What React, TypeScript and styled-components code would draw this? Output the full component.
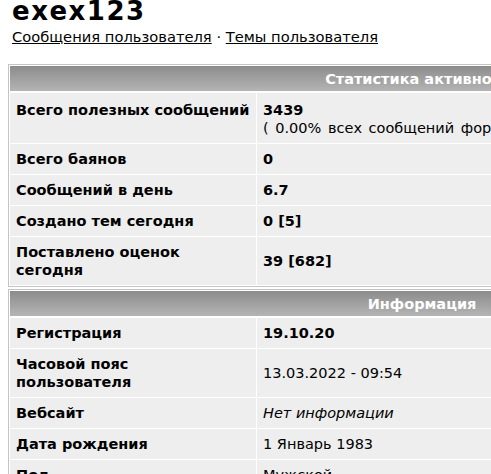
import React from "react";
import styled, { createGlobalStyle } from "styled-components";

const Global = createGlobalStyle`
  html, body { margin: 0; padding: 0; overflow: hidden; background: #fff; }
  body { font-family: "DejaVu Sans", Verdana, sans-serif; color: #000; }
`;

const Page = styled.div`
  padding: 0 8px;
  width: 828px;
`;

const Head = styled.div`
  padding-left: 4px;
`;

const Title = styled.h1`
  margin: 0;
  font-size: 26px;
  line-height: 23px;
  letter-spacing: 1.5px;
  font-weight: bold;
  white-space: nowrap;
`;

const Links = styled.div`
  font-size: 14.7px;
  line-height: 17px;
  margin-top: 5px;
  white-space: nowrap;
  a { color: #000; text-decoration: underline; }
`;

const Box = styled.div<{ $top: number }>`
  margin-top: ${(p) => p.$top}px;
  border: 1px solid #c4c4c4;
  padding: 1px;
  background: #fff;
  display: grid;
  grid-template-columns: 246px 1fr;
  gap: 1px;
  font-size: 14.5px;
  line-height: 18px;
`;

const Header = styled.div`
  grid-column: 1 / -1;
  height: 25px;
  margin-bottom: 1px;
  background: linear-gradient(#8c8c8c, #b4b4b4);
  color: #fff;
  font-weight: bold;
  display: flex;
  align-items: center;
  justify-content: center;
  white-space: nowrap;
`;

const Label = styled.div<{ $top?: boolean }>`
  background: #eeeeee;
  font-weight: bold;
  padding: ${(p) => (p.$top ? "8px 6px 6px" : "6px")};
  display: flex;
  align-items: ${(p) => (p.$top ? "flex-start" : "center")};
`;

const Value = styled.div<{ $bold?: boolean; $italic?: boolean; $top?: boolean }>`
  background: #eeeeee;
  padding: ${(p) => (p.$top ? "8px 6px 6px" : "6px")};
  font-weight: ${(p) => (p.$bold ? "bold" : "normal")};
  font-style: ${(p) => (p.$italic ? "italic" : "normal")};
  display: flex;
  flex-direction: column;
  justify-content: center;
  white-space: nowrap;
`;

const Strong = styled.span`
  font-weight: bold;
`;

const Share = styled.span`
  word-spacing: 2px;
`;

export default function App() {
  return (
    <>
      <Global />
      <Page>
        <Head>
          <Title>exex123</Title>
          <Links>
            <a href="#">Сообщения пользователя</a> · <a href="#">Темы пользователя</a>
          </Links>
        </Head>
        <Box $top={19}>
          <Header>Статистика активности</Header>
          <Label $top>Всего полезных сообщений</Label>
          <Value $top>
            <Strong>3439</Strong>
            <Share>( 0.00% всех сообщений форума )</Share>
          </Value>
          <Label>Всего баянов</Label>
          <Value $bold>0</Value>
          <Label>Сообщений в день</Label>
          <Value $bold>6.7</Value>
          <Label>Создано тем сегодня</Label>
          <Value $bold>0 [5]</Value>
          <Label>Поставлено оценок сегодня</Label>
          <Value $bold>39 [682]</Value>
        </Box>
        <Box $top={2}>
          <Header>Информация</Header>
          <Label>Регистрация</Label>
          <Value $bold>19.10.20</Value>
          <Label>
            Часовой пояс
            <br />
            пользователя
          </Label>
          <Value>13.03.2022 - 09:54</Value>
          <Label>Вебсайт</Label>
          <Value $italic>Нет информации</Value>
          <Label>Дата рождения</Label>
          <Value>1 Январь 1983</Value>
          <Label>Пол</Label>
          <Value>Мужской</Value>
        </Box>
      </Page>
    </>
  );
}
